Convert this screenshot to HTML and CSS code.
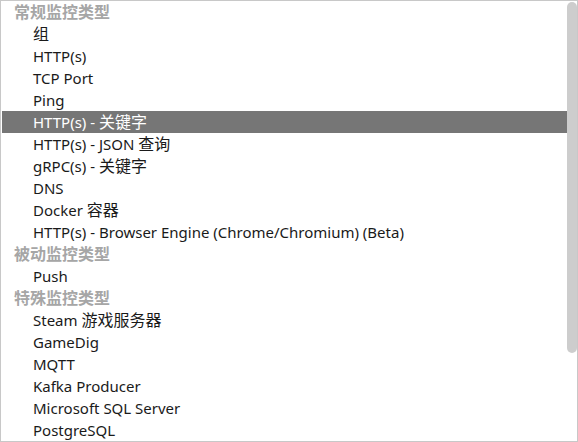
FILE: index.html
```html
<!DOCTYPE html>
<html lang="zh-CN">
<head>
<meta charset="utf-8">
<link rel="stylesheet" href="styles.css">
</head>
<body>
<div class="box">
  <div class="list">
    <div class="group">常规监控类型</div>
    <div class="opt"><span class="cjk">组</span></div>
    <div class="opt">HTTP(s)</div>
    <div class="opt">TCP Port</div>
    <div class="opt">Ping</div>
    <div class="opt sel">HTTP(s) - <span class="cjk">关键字</span></div>
    <div class="opt">HTTP(s) - JSON <span class="cjk">查询</span></div>
    <div class="opt">gRPC(s) - <span class="cjk">关键字</span></div>
    <div class="opt">DNS</div>
    <div class="opt">Docker <span class="cjk">容器</span></div>
    <div class="opt">HTTP(s) - Browser Engine (Chrome/Chromium) (Beta)</div>
    <div class="group">被动监控类型</div>
    <div class="opt">Push</div>
    <div class="group">特殊监控类型</div>
    <div class="opt">Steam <span class="cjk">游戏服务器</span></div>
    <div class="opt">GameDig</div>
    <div class="opt">MQTT</div>
    <div class="opt">Kafka Producer</div>
    <div class="opt">Microsoft SQL Server</div>
    <div class="opt">PostgreSQL</div>
  </div>
  <div class="track"><div class="thumb"></div></div>
</div>
</body>
</html>
```
FILE: styles.css
```css
html, body { margin: 0; padding: 0; background: #fff; }
.box {
  width: 578px;
  height: 442px;
  box-sizing: border-box;
  border: 1px solid #c8c8c8;
  display: flex;
  overflow: hidden;
  font-family: "Noto Sans", "Noto Sans CJK SC", sans-serif;
  font-size: 15px;
}
.list {
  flex: 1;
  padding-left: 1px;
  overflow: hidden;
}
.group, .opt {
  height: 22px;
  line-height: 22px;
  white-space: nowrap;
}
.group {
  color: #a6a6a6;
  font-weight: bold;
  font-size: 16px;
  padding-left: 12px;
}
.opt {
  color: #1a1a1a;
  padding-left: 31px;
}
.cjk {
  font-size: 16px;
  line-height: 20px;
}
.opt.sel {
  background: #767676;
  color: #fff;
}
.track {
  width: 10px;
  padding-top: 1px;
}
.thumb {
  width: 10px;
  height: 351px;
  background: #cdcdcd;
  border-radius: 5px;
}
```
